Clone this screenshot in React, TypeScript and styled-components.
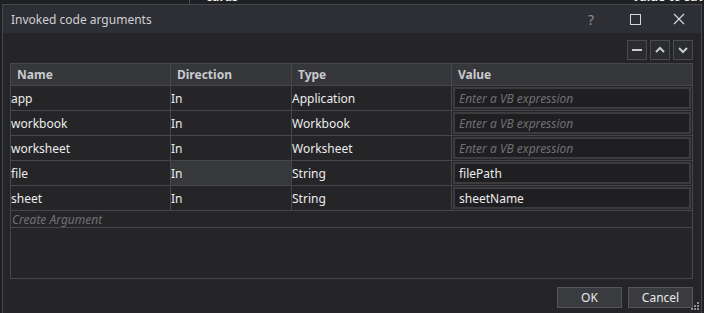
import * as React from 'react';
import styled, { createGlobalStyle } from 'styled-components';

const GlobalStyle = createGlobalStyle`
  html, body {
    margin: 0;
    padding: 0;
    background: #1e1f22;
    overflow: hidden;
  }
  body {
    font-family: "Noto Sans", "Open Sans", sans-serif;
    font-size: 12px;
  }
`;

const BackStrip = styled.div`
  height: 4px;
  overflow: hidden;
  display: flex;
  background: #1f2023;
`;

const BackCell = styled.div<{ $w: number; $divider?: boolean }>`
  width: ${p => p.$w}px;
  flex: none;
  border-right: ${p => (p.$divider ? '1px solid #4a4b50' : 'none')};
  color: #f2f2f2;
  font-weight: 700;
  font-size: 12px;
  line-height: 12px;
  margin-top: -9px;
  padding-left: ${p => (p.$divider ? 0 : 16)}px;
`;

const Dialog = styled.div`
  margin-left: 2px;
  width: 698px;
  height: 320px;
  border: 1px solid #46474d;
  background: #252527;
  display: flex;
  flex-direction: column;
`;

const TitleBar = styled.div`
  height: 28px;
  background: #2e2f34;
  display: flex;
  align-items: center;
  padding-left: 8px;
  color: #cfd0d4;
  font-size: 12px;
`;

const Title = styled.div`
  flex: 1;
`;

const TitleButton = styled.div`
  width: 44px;
  height: 28px;
  display: flex;
  align-items: center;
  justify-content: center;
  color: #8d8e93;
  font-size: 14px;
`;

const Body = styled.div`
  padding: 7px 8px 0 7px;
  display: flex;
  flex-direction: column;
`;

const Toolbar = styled.div`
  display: flex;
  justify-content: flex-end;
  gap: 3px;
  margin-bottom: 3px;
`;

const ToolButton = styled.div`
  width: 18px;
  height: 18px;
  border: 1px solid #4a4b51;
  background: #2b2c30;
  display: flex;
  align-items: center;
  justify-content: center;
`;

const Grid = styled.div`
  border: 1px solid #46474b;
  height: 214px;
  display: flex;
  flex-direction: column;
`;

const Row = styled.div<{ $header?: boolean }>`
  display: grid;
  grid-template-columns: 160px 121px 160px 1fr;
  height: ${p => (p.$header ? 21 : 24)}px;
  border-bottom: 1px solid #46474b;
  background: ${p => (p.$header ? '#36373b' : 'transparent')};
  flex: none;
`;

const HeadCell = styled.div`
  border-right: 1px solid #46474b;
  padding-left: 6px;
  display: flex;
  align-items: center;
  font-weight: 700;
  color: #c9cacd;
  &:last-child {
    border-right: none;
  }
`;

const Cell = styled.div<{ $selected?: boolean }>`
  border-right: 1px solid #46474b;
  display: flex;
  align-items: center;
  color: #ececee;
  background: ${p => (p.$selected ? '#36383c' : 'transparent')};
`;

const ValueCell = styled.div`
  padding: 1px;
  display: flex;
`;

const ValueBox = styled.div<{ $placeholder?: boolean }>`
  flex: 1;
  border: 2px solid #3c3c3f;
  background: #1f1f21;
  display: flex;
  align-items: center;
  padding-left: 4px;
  color: ${p => (p.$placeholder ? '#6f7074' : '#ececee')};
  font-style: ${p => (p.$placeholder ? 'italic' : 'normal')};
`;

const CreateRow = styled.div`
  height: 16px;
  border-bottom: 1px solid #46474b;
  display: flex;
  align-items: center;
  padding-left: 1px;
  color: #6f7074;
  font-style: italic;
  flex: none;
`;

const Footer = styled.div`
  display: flex;
  justify-content: flex-end;
  gap: 6px;
  margin-top: 8px;
`;

const DialogButton = styled.div`
  width: 63px;
  height: 19px;
  border: 1px solid #55565b;
  background: #3a3b3f;
  color: #e8e8ea;
  display: flex;
  align-items: center;
  justify-content: center;
`;

const Grip = styled.svg`
  position: absolute;
  left: 690px;
  top: 301px;
`;

type Arg = { name: string; type: string; value?: string; selected?: boolean };

const args: Arg[] = [
  { name: 'app', type: 'Application' },
  { name: 'workbook', type: 'Workbook' },
  { name: 'worksheet', type: 'Worksheet' },
  { name: 'file', type: 'String', value: 'filePath', selected: true },
  { name: 'sheet', type: 'String', value: 'sheetName' },
];

export default function App() {
  return (
    <>
      <GlobalStyle />
      <BackStrip aria-hidden>
        <BackCell $w={189} $divider />
        <BackCell $w={410}>cards</BackCell>
        <BackCell $w={100}>Value to save</BackCell>
      </BackStrip>
      <Dialog>
        <TitleBar>
          <Title>Invoked code arguments</Title>
          <TitleButton>?</TitleButton>
          <TitleButton>
            <svg width="11" height="11" viewBox="0 0 11 11">
              <rect x="0.5" y="0.5" width="10" height="10" fill="none" stroke="#d6d7da" />
            </svg>
          </TitleButton>
          <TitleButton>
            <svg width="12" height="12" viewBox="0 0 12 12">
              <path d="M1 1L11 11M11 1L1 11" stroke="#d6d7da" strokeWidth="1.2" />
            </svg>
          </TitleButton>
        </TitleBar>
        <Body>
          <Toolbar>
            <ToolButton>
              <svg width="10" height="10" viewBox="0 0 10 10">
                <rect x="0" y="4" width="10" height="2" fill="#c9cacd" />
              </svg>
            </ToolButton>
            <ToolButton>
              <svg width="10" height="10" viewBox="0 0 10 10">
                <path d="M1 7L5 3L9 7" fill="none" stroke="#c9cacd" strokeWidth="2" />
              </svg>
            </ToolButton>
            <ToolButton>
              <svg width="10" height="10" viewBox="0 0 10 10">
                <path d="M1 3L5 7L9 3" fill="none" stroke="#c9cacd" strokeWidth="2" />
              </svg>
            </ToolButton>
          </Toolbar>
          <Grid>
            <Row $header>
              <HeadCell>Name</HeadCell>
              <HeadCell>Direction</HeadCell>
              <HeadCell>Type</HeadCell>
              <HeadCell>Value</HeadCell>
            </Row>
            {args.map(a => (
              <Row key={a.name}>
                <Cell>{a.name}</Cell>
                <Cell $selected={a.selected}>In</Cell>
                <Cell>{a.type}</Cell>
                <ValueCell>
                  <ValueBox $placeholder={!a.value}>
                    {a.value ?? 'Enter a VB expression'}
                  </ValueBox>
                </ValueCell>
              </Row>
            ))}
            <CreateRow>Create Argument</CreateRow>
          </Grid>
          <Footer>
            <DialogButton>OK</DialogButton>
            <DialogButton>Cancel</DialogButton>
          </Footer>
        </Body>
      </Dialog>
      <Grip width="10" height="10" viewBox="0 0 10 10">
        <rect x="7" y="1" width="2" height="2" fill="#8d8e93" />
        <rect x="4" y="4" width="2" height="2" fill="#8d8e93" />
        <rect x="7" y="4" width="2" height="2" fill="#8d8e93" />
        <rect x="1" y="7" width="2" height="2" fill="#8d8e93" />
        <rect x="4" y="7" width="2" height="2" fill="#8d8e93" />
        <rect x="7" y="7" width="2" height="2" fill="#8d8e93" />
      </Grip>
    </>
  );
}
